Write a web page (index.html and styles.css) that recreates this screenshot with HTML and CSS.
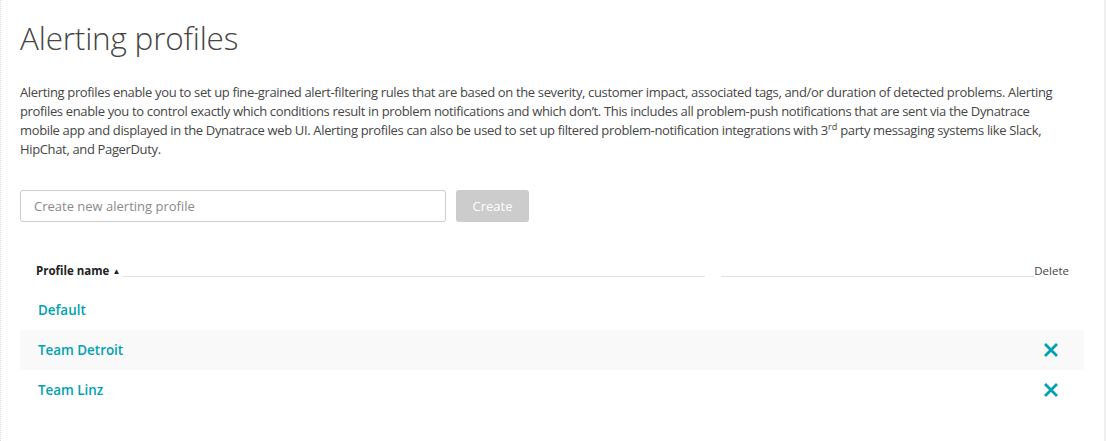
FILE: index.html
```html
<!DOCTYPE html>
<html>
<head>
<meta charset="utf-8">
<link rel="stylesheet" href="styles.css">
</head>
<body>
<div class="page">
  <main class="content">
    <h1 class="title">Alerting profiles</h1>
    <p class="intro">Alerting profiles enable you to set up fine-grained alert-filtering rules that are based on the severity, customer impact, associated tags, and/or duration of detected problems. Alerting profiles enable you to control exactly which conditions result in problem notifications and which don’t. This includes all problem-push notifications that are sent via the Dynatrace mobile app and displayed in the Dynatrace web UI. Alerting profiles can also be used to set up filtered problem-notification integrations with 3<sup>rd</sup> party messaging systems like Slack, HipChat, and PagerDuty.</p>
    <form class="create">
      <input class="create-input" type="text" placeholder="Create new alerting profile">
      <button class="create-btn" type="button" disabled>Create</button>
    </form>
    <div class="table">
      <div class="thead">
        <div class="th th-name"><span class="th-label">Profile name <span class="sort">▲</span></span><span class="th-line"></span></div>
        <div class="th th-mid"><span class="th-line"></span></div>
        <div class="th th-del"><span class="th-label light">Delete</span></div>
      </div>
      <div class="row">
        <a class="name">Default</a>
      </div>
      <div class="row alt">
        <a class="name">Team Detroit</a>
        <span class="del"><svg viewBox="0 0 14 14" width="14" height="14"><path d="M2 2 L12 12 M12 2 L2 12" stroke="currentColor" stroke-width="2.8" stroke-linecap="square" fill="none"/></svg></span>
      </div>
      <div class="row">
        <a class="name">Team Linz</a>
        <span class="del"><svg viewBox="0 0 14 14" width="14" height="14"><path d="M2 2 L12 12 M12 2 L2 12" stroke="currentColor" stroke-width="2.8" stroke-linecap="square" fill="none"/></svg></span>
      </div>
    </div>
  </main>
  <div class="scrollbar"></div>
</div>
</body>
</html>
```

FILE: styles.css
```css
* { box-sizing: border-box; }
html, body { margin: 0; padding: 0; background: #fff; }
body {
  font-family: "Open Sans", "Noto Sans", sans-serif;
  color: #454646;
  width: 1106px;
  height: 441px;
  overflow: hidden;
}
.page {
  display: flex;
  height: 441px;
  border-left: 1px dotted #dcdcdc;
}
.content {
  flex: 1;
  padding: 0 20px 0 19px;
}
.scrollbar {
  width: 2px;
  background: #efefef;
}
.title {
  margin: 0;
  padding-top: 18px;
  font-size: 31.5px;
  font-weight: 300;
  line-height: 40px;
  color: #454646;
  letter-spacing: -0.2px;
}
.intro {
  margin: 25px 0 0;
  max-width: 1050px;
  font-size: 13px;
  line-height: 19px;
  letter-spacing: -0.35px;
}
.intro sup {
  font-size: 9px;
  line-height: 0;
  letter-spacing: 0;
}
.create {
  display: flex;
  gap: 10px;
  margin-top: 31px;
}
.create-input {
  width: 426px;
  height: 32px;
  border: 1px solid #cccccc;
  border-radius: 3px;
  padding: 0 13px;
  font-family: inherit;
  font-size: 13px;
  color: #454646;
}
.create-input::placeholder { color: #8a8a8a; }
.create-btn {
  width: 73px;
  height: 32px;
  border: 0;
  border-radius: 3px;
  background: #cccccc;
  color: #ffffff;
  font-family: inherit;
  font-size: 13px;
}
.table { margin-top: 38px; }
.thead {
  display: flex;
  align-items: flex-end;
  height: 30px;
  padding-bottom: 12px;
  font-size: 11.5px;
}
.th { display: flex; align-items: flex-end; }
.th-name { flex: 0 0 685px; padding-left: 16px; }
.th-mid { flex: 1; padding-left: 14px; }
.th-del { flex: 0 0 auto; padding-right: 15px; }
.th-label { white-space: nowrap; line-height: 14px; }
.th-name .th-label { font-weight: 700; color: #222; }
.light { color: #454646; }
.sort { font-size: 8px; vertical-align: 1px; }
.th-line {
  flex: 1;
  height: 1px;
  background: #e2e2e2;
  margin-left: 2px;
  margin-bottom: 1px;
}
.row {
  display: flex;
  align-items: center;
  justify-content: space-between;
  height: 40px;
  padding: 0 20px 0 18px;
}
.row.alt { background: #f9f9f9; }
.name {
  font-size: 13.4px;
  font-weight: 600;
  color: #00a1b2;
}
.del {
  display: flex;
  color: #00a1b2;
  margin-right: 6px;
}
```
